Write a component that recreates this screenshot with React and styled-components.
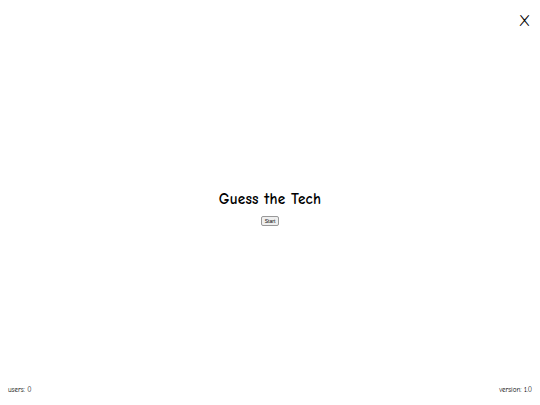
import React from "react";
import styled, { createGlobalStyle } from "styled-components";

const Global = createGlobalStyle`
  html, body, #root { margin: 0; padding: 0; height: 100%; }
  body { background: #fff; font-family: "Comic Sans MS", "Comic Neue", cursive; color: #000; }
`;

const Page = styled.div`
  position: relative;
  width: 540px;
  height: 405px;
  display: flex;
  flex-direction: column;
  box-sizing: border-box;
`;

const Close = styled.button`
  position: absolute;
  top: 11px;
  right: 10px;
  border: none;
  background: none;
  padding: 0;
  font-family: "Comic Sans MS", "Comic Neue", cursive;
  font-size: 16px;
  line-height: 20px;
  color: #000;
  cursor: pointer;
`;

const Center = styled.main`
  flex: 1;
  display: flex;
  flex-direction: column;
  align-items: center;
  justify-content: center;
  padding-top: 28px;
`;

const Title = styled.h1`
  margin: 0;
  font-size: 15.2px;
  font-weight: 900;
  line-height: 20px;
  letter-spacing: 0.2px;
`;

const StartButton = styled.button`
  margin-top: 7px;
  font-family: "Liberation Sans", Arial, sans-serif;
  font-size: 5px;
  padding: 1px 3px;
  border: 1px solid #999;
  border-radius: 2px;
  background: #efefef;
  color: #000;
`;

const Footer = styled.footer`
  display: flex;
  justify-content: space-between;
  padding: 0 8px 11px 8px;
  font-family: "Comic Sans MS", "Comic Neue", cursive;
  font-size: 7px;
  line-height: 8px;
  color: #000;
`;

export default function App() {
  return (
    <>
      <Global />
      <Page>
        <Close>X</Close>
        <Center>
          <Title>Guess the Tech</Title>
          <StartButton>Start</StartButton>
        </Center>
        <Footer>
          <span>users: 0</span>
          <span>version: 1.0</span>
        </Footer>
      </Page>
    </>
  );
}
